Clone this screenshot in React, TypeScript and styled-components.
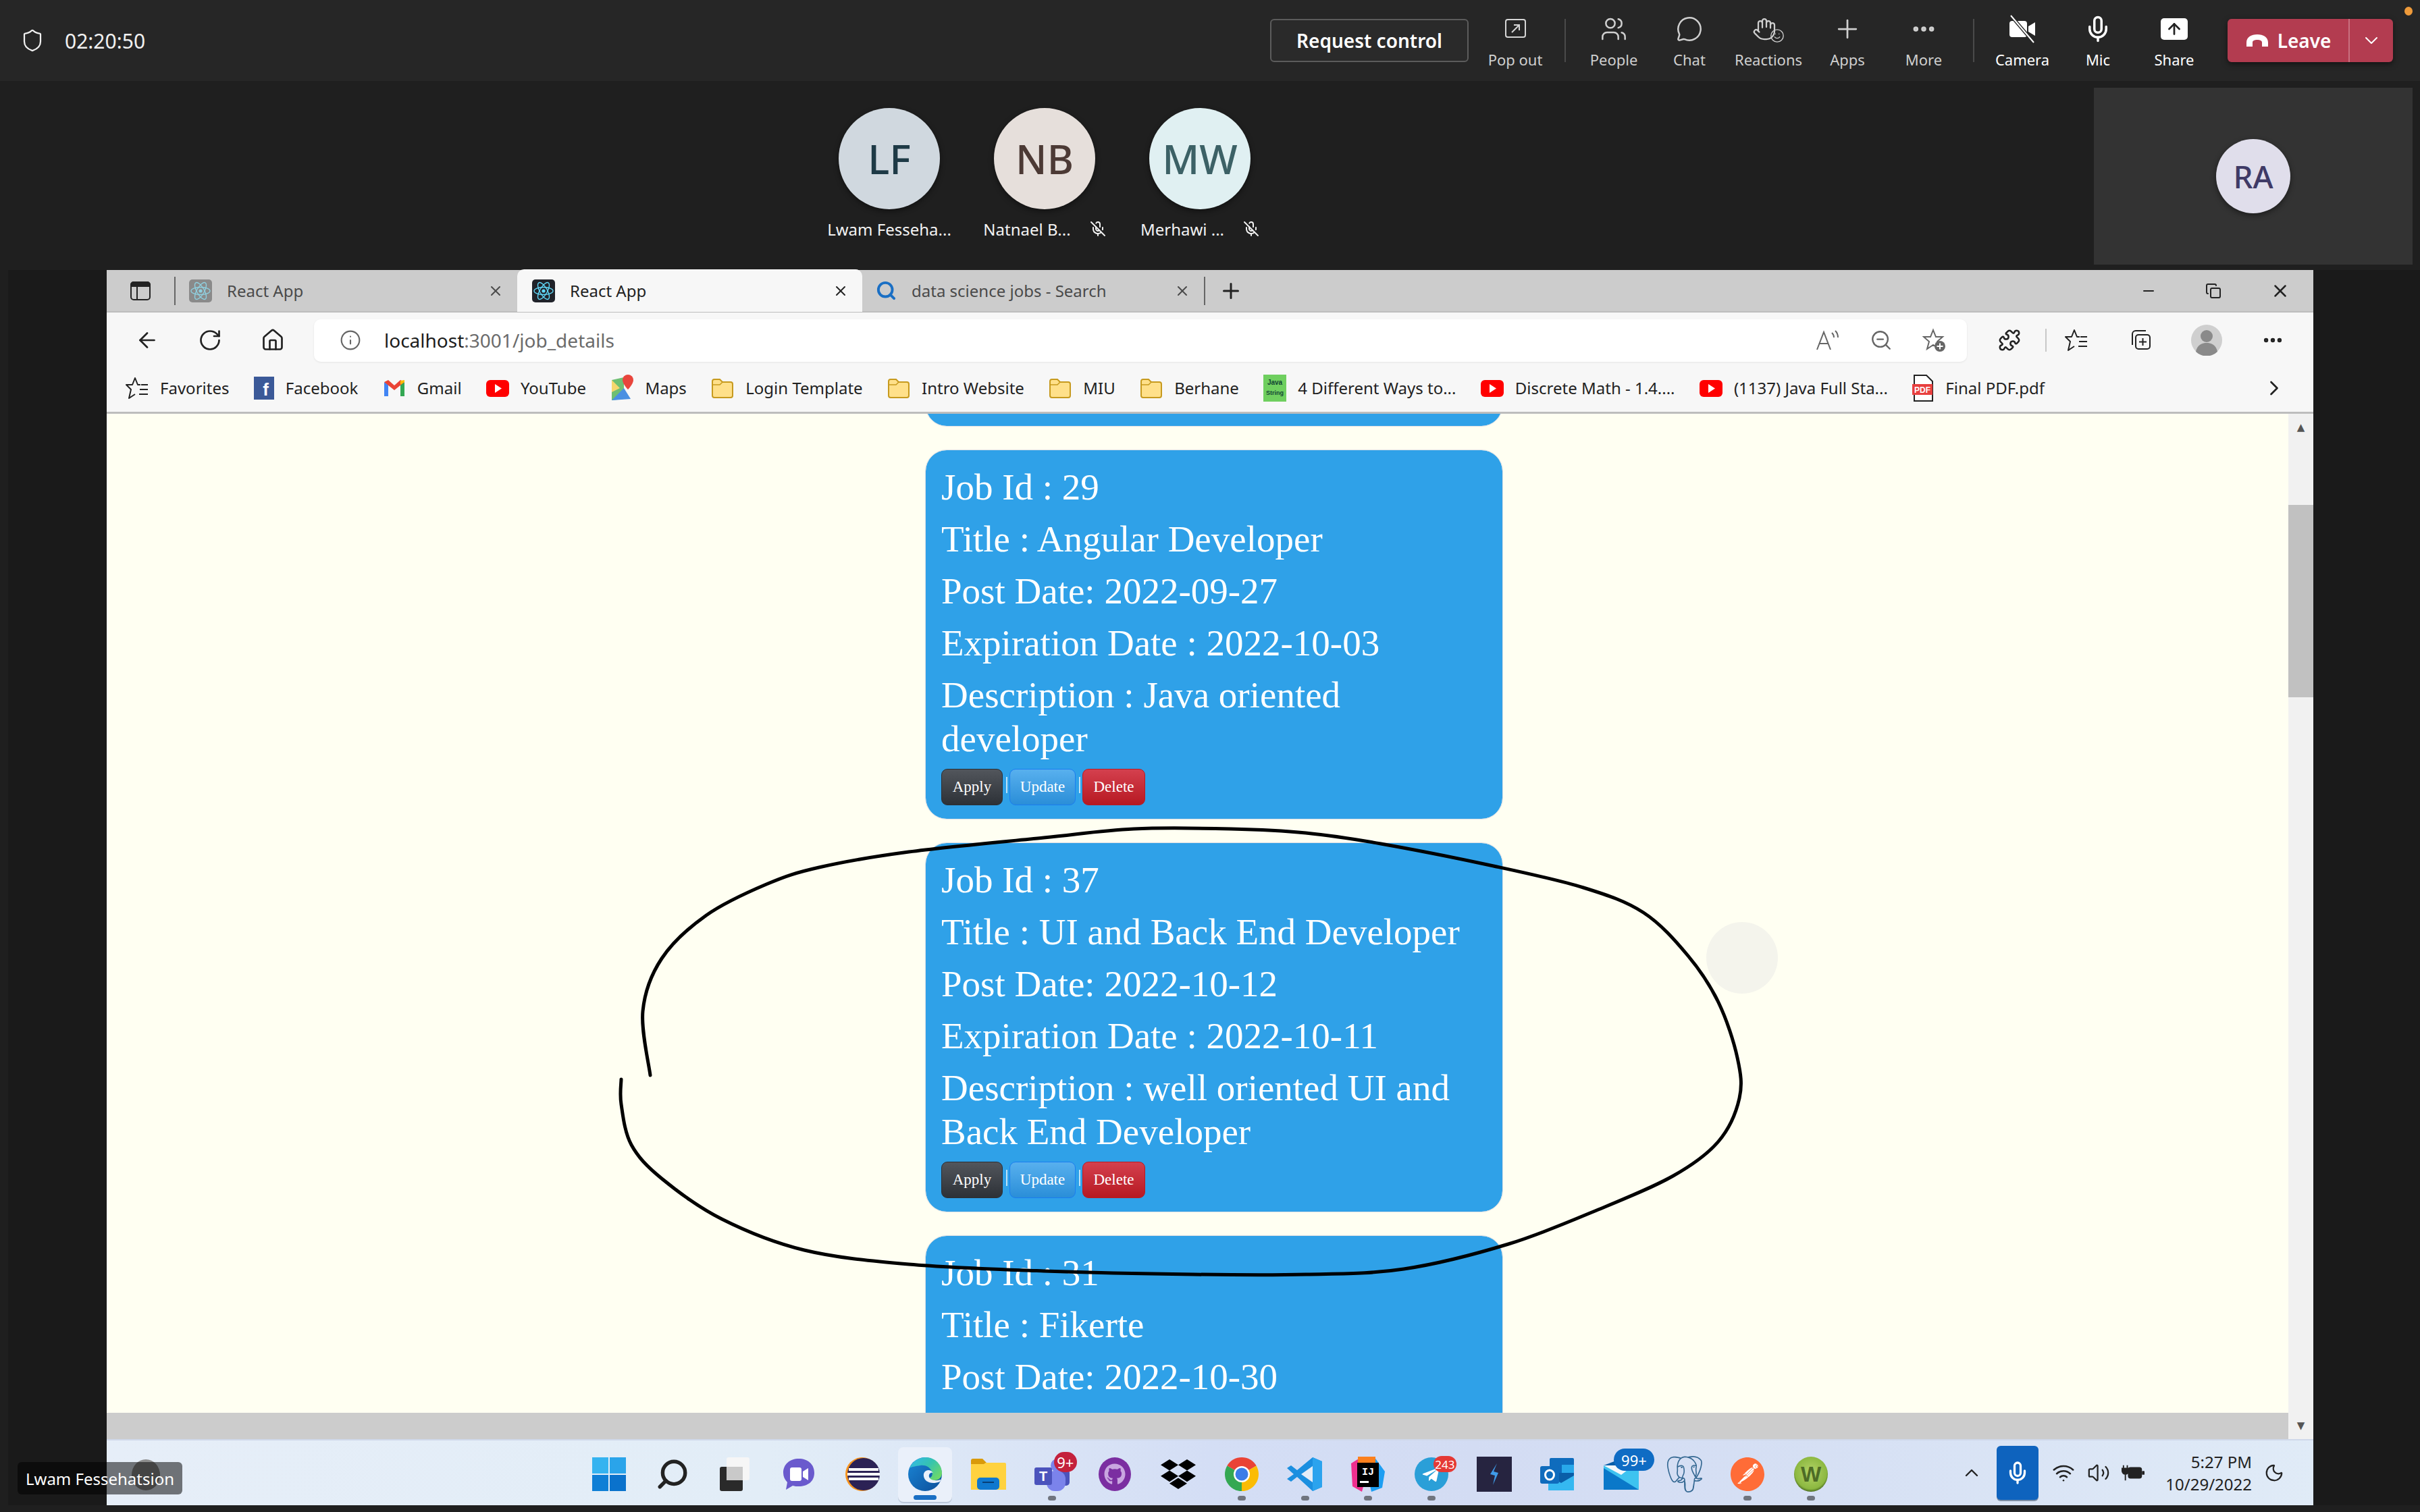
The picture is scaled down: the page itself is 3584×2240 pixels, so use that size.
import React from 'react'
import styled, { createGlobalStyle } from 'styled-components'
import {
	ArrowLeft, ArrowUp, ChevronDown, ChevronRight, ChevronUp, Copy, Ellipsis, Hand, Home, Info, MessageCircle, Mic, MicOff,
	Minus, Moon, Plus, Puzzle, RotateCw, Search, Shield, Smile, Users, Volume2, Wifi, X, ZoomOut,
} from 'lucide-react'
import { FaDropbox, FaGithub, FaTelegramPlane } from 'react-icons/fa'
import { SiPostgresql, SiPostman } from 'react-icons/si'

const GlobalStyle = createGlobalStyle`
	html, body {
		margin: 0;
		padding: 0;
		background: #1f1f1f;
	}
	* {
		box-sizing: border-box;
	}
`

const Page = styled.div`
	position: relative;
	width: 3584px;
	height: 2240px;
	overflow: hidden;
	background: #1f1f1f;
	font-family: "Noto Sans", sans-serif;
`

/* meeting toolbar */
const TopBar = styled.div`
	height: 120px;
	background: #262626;
	display: flex;
	align-items: center;
	padding: 0 40px 0 30px;
	color: #fff;
`

const Timer = styled.div`
	display: flex;
	align-items: center;
	gap: 30px;
	font-size: 30px;
	color: #f0f0f0;
	margin-right: auto;
`

const RequestButton = styled.div`
	width: 294px;
	height: 64px;
	border: 2px solid #5c5c5c;
	border-radius: 6px;
	background: #2a2a2a;
	display: flex;
	align-items: center;
	justify-content: center;
	font-size: 28px;
	font-weight: 600;
	margin-right: 19px;
`

const TopAction = styled.div<{ $w: number; $bright?: boolean }>`
	width: ${p => p.$w}px;
	height: 82px;
	display: flex;
	flex-direction: column;
	align-items: center;
	justify-content: space-between;
	font-size: 22px;
	line-height: 26px;
	color: ${p => (p.$bright ? '#fff' : '#cfcfcf')};
`

const ActionIcon = styled.div`
	height: 48px;
	display: flex;
	align-items: center;
	justify-content: center;
`

const SmileBadge = styled.span`
	display: flex;
	margin: 20px 0 0 -10px;
`

const TopSep = styled.div<{ $ml: number }>`
	width: 2px;
	height: 64px;
	background: #4a4a4a;
	margin: 0 15px 0 ${p => p.$ml}px;
`

const ShareBox = styled.div`
	width: 40px;
	height: 32px;
	background: #fff;
	border-radius: 5px;
	display: flex;
	align-items: center;
	justify-content: center;
	color: #222;
`

const LeaveButton = styled.div`
	width: 245px;
	height: 64px;
	margin-left: 22px;
	background: #b33c50;
	border-radius: 6px;
	display: flex;
	align-items: center;
	box-shadow: 0 3px 8px rgba(0, 0, 0, 0.5);
`

const LeaveMain = styled.div`
	width: 181px;
	height: 100%;
	display: flex;
	align-items: center;
	justify-content: center;
	gap: 12px;
	font-size: 28px;
	font-weight: 600;
	border-right: 2px solid #c9707f;
`

const LeaveCaret = styled.div`
	flex: 1;
	display: flex;
	justify-content: center;
`

const RecordDot = styled.div`
	position: absolute;
	top: 10px;
	left: 3561px;
	width: 12px;
	height: 13px;
	border-radius: 50%;
	background: #ee9a3a;
`

/* participants */
const Stage = styled.div`
	height: 280px;
	display: flex;
	padding-left: 1202px;
`

const Tile = styled.div`
	width: 230px;
	padding-top: 40px;
	display: flex;
	flex-direction: column;
	align-items: center;
`

const Avatar = styled.div<{ $bg: string; $fg: string; $size?: number }>`
	width: ${p => p.$size || 150}px;
	height: ${p => p.$size || 150}px;
	border-radius: 50%;
	background: ${p => p.$bg};
	color: ${p => p.$fg};
	font-size: ${p => ((p.$size || 150) > 120 ? 60 : 46)}px;
	font-weight: 500;
	display: flex;
	align-items: center;
	justify-content: center;
	box-shadow: 0 3px 8px rgba(0, 0, 0, 0.45);
`

const TileName = styled.div`
	margin-top: 15px;
	height: 28px;
	display: flex;
	align-items: center;
	gap: 28px;
	font-size: 24px;
	color: #f2f2f2;
	white-space: nowrap;
`

const SelfTile = styled.div`
	width: 472px;
	height: 262px;
	margin: 10px 11px 0 auto;
	background: #333;
	display: flex;
	align-items: center;
	justify-content: center;
`

/* browser */
const Surface = styled.div`
	height: 1830px;
	margin-left: 12px;
	padding-left: 146px;
	background: #1a1a1a;
`

const Browser = styled.div`
	width: 3268px;
	height: 1830px;
	display: flex;
	flex-direction: column;
	background: #f7f7f7;
`

const TabStrip = styled.div`
	height: 63px;
	background: #ccc;
	display: flex;
	align-items: center;
	border-bottom: 2px solid #bdbdbd;
	color: #222;
`

const StripButton = styled.div`
	width: 100px;
	padding-left: 34px;
	height: 100%;
	display: flex;
	align-items: center;
`

const StripSep = styled.div`
	width: 2px;
	height: 42px;
	background: #666;
`

const Tab = styled.div<{ $active?: boolean; $w: number }>`
	width: ${p => p.$w}px;
	height: 63px;
	display: flex;
	align-items: center;
	gap: 22px;
	padding: 0 20px 0 ${p => (p.$active ? 22 : 20)}px;
	background: ${p => (p.$active ? '#f7f7f7' : 'transparent')};
	border-radius: ${p => (p.$active ? '10px 10px 0 0' : '0')};
	color: ${p => (p.$active ? '#222' : '#4a4a4a')};
	font-size: 24px;
`

const TabTitle = styled.span`
	flex: 1;
	white-space: nowrap;
`

const NewTab = styled.div`
	margin-left: 20px;
	display: flex;
`

const WindowControls = styled.div`
	margin-left: auto;
	display: flex;
	align-items: center;
	gap: 72px;
	padding-right: 34px;
`

const Toolbar = styled.div`
	height: 76px;
	padding-top: 6px;
	display: flex;
	align-items: center;
	color: #222;
`

const NavButtons = styled.div`
	width: 307px;
	padding-left: 42px;
	display: flex;
	align-items: center;
	gap: 57px;
`

const AddressBar = styled.div`
	width: 2448px;
	height: 63px;
	background: #fff;
	border-radius: 10px;
	display: flex;
	align-items: center;
	padding: 0 30px 0 38px;
	box-shadow: 0 1px 3px rgba(0, 0, 0, 0.08);
	color: #666;
	font-size: 28px;
	gap: 34px;
`

const Url = styled.div`
	flex: 1;
	color: #6b6b6b;
	b {
		font-weight: 400;
		color: #1c1c1c;
	}
`

const AddressIcons = styled.div`
	display: flex;
	align-items: center;
	gap: 44px;
	color: #666;
`

const BrowserTools = styled.div`
	flex: 1;
	display: flex;
	align-items: center;
	padding-left: 46px;
`

const ToolSep = styled.div`
	width: 2px;
	height: 34px;
	background: #c8c8c8;
	margin: 0 27px 0 36px;
`

const ToolSlot = styled.div<{ $mr: number }>`
	display: flex;
	margin-right: ${p => p.$mr}px;
`

const Bookmarks = styled.div`
	height: 74px;
	display: flex;
	align-items: center;
	padding: 0 40px 0 28px;
	gap: 36.4px;
	border-bottom: 3px solid #bdbdbd;
	font-size: 24px;
	color: #222;
`

const Bookmark = styled.div`
	display: flex;
	align-items: center;
	gap: 17px;
	white-space: nowrap;
`

const BookmarksEnd = styled.div`
	margin-left: auto;
	display: flex;
`

const Body = styled.div`
	flex: 1;
	min-height: 0;
	display: flex;
`

const BodyMain = styled.div`
	flex: 1;
	display: flex;
	flex-direction: column;
	min-width: 0;
`

const Content = styled.div`
	flex: 1;
	min-height: 0;
	overflow: hidden;
	background: #fffff2;
	display: flex;
	flex-direction: column;
	align-items: center;
	gap: 34px;
	padding-left: 49px;
	font-family: "Liberation Serif", serif;
`

const StatusBand = styled.div`
	height: 39px;
	background: #ccc;
`

const Scrollbar = styled.div`
	width: 37px;
	background: #f1f1f1;
	display: flex;
	flex-direction: column;
	align-items: center;
	color: #555;
`

const ScrollArrow = styled.div<{ $end?: boolean }>`
	height: 40px;
	margin-top: ${p => (p.$end ? 'auto' : '0')};
	display: flex;
	align-items: center;
	justify-content: center;
	font-family: "DejaVu Sans", sans-serif;
	font-size: 15px;
`

const ScrollThumb = styled.div`
	width: 100%;
	height: 285px;
	margin-top: 95px;
	background: #c1c1c1;
`

const Card = styled.div<{ $stub?: boolean; $tall?: boolean }>`
	flex: none;
	width: 856px;
	padding: 22px 23px 20px 23px;
	background: #2fa1e8;
	border: 1px solid #dcdfe4;
	background-clip: padding-box;
	border-radius: 32px;
	color: #fff;
	${p => p.$stub && 'height: 100px; margin-top: -81px;'}
	${p => p.$tall && 'min-height: 548px;'}
`

const Line = styled.p`
	margin: 0 0 12px;
	font-size: 55px;
	line-height: 65px;
`

const ButtonRow = styled.div`
	display: flex;
	align-items: center;
`

const JobButton = styled.div<{ $kind: 'apply' | 'update' | 'delete' }>`
	height: 54px;
	width: ${p => ({ apply: 91, update: 98, delete: 93 })[p.$kind]}px;
	border-radius: 9px;
	display: flex;
	align-items: center;
	justify-content: center;
	font-size: 23px;
	color: #fff;
	border: 1px solid ${p => ({ apply: '#2b2e33', update: '#1a7df0', delete: '#b81a22' })[p.$kind]};
	background: linear-gradient(
		${p => ({ apply: '#52565c, #2d3137', update: '#58b0ee, #2a8ed8', delete: '#d4404e, #b71922' })[p.$kind]}
	);
`

const Pipe = styled.span`
	width: 2px;
	height: 24px;
	margin: -6px 3px 0 5px;
	background: #bfe2f8;
`

/* taskbar */
const Taskbar = styled.div`
	height: 98px;
	display: flex;
	align-items: stretch;
	padding-left: 37px;
	border-top: 2px solid #cfd8ea;
	background: linear-gradient(90deg, #e6eef8 0%, #e2edf7 30%, #d4def5 50%, #d3dcf3 62%, #d6e0f4 78%, #e0ebf7 100%);
`

const WeatherDot = styled.div`
	width: 42px;
	height: 46px;
	margin: 28px 618px 0 0;
	border-radius: 50%;
	background: #8e8e8e;
`

const TaskItem = styled.div<{ $active?: boolean; $dot?: boolean }>`
	position: relative;
	width: 93.7px;
	display: flex;
	align-items: center;
	justify-content: center;
	color: #222;
	${p => p.$active && `
		&::before {
			content: '';
			position: absolute;
			left: 7px;
			right: 7px;
			top: 10px;
			bottom: 5px;
			border-radius: 8px;
			background: #eaf0fa;
			box-shadow: 0 2px 0 #bcc8da;
		}
		&::after {
			content: '';
			position: absolute;
			left: 30px;
			width: 34px;
			height: 7px;
			bottom: 8px;
			border-radius: 4px;
			background: #1a6fc4;
		}
	`}
	${p => p.$dot && `
		&::after {
			content: '';
			position: absolute;
			left: 41px;
			width: 12px;
			height: 7px;
			bottom: 7px;
			border-radius: 4px;
			background: #70757f;
		}
	`}
	& > svg {
		position: relative;
		z-index: 1;
		margin-top: 4px;
	}
`

const Badge = styled.div<{ $bg: string; $top: number; $left: number; $w: number; $h: number }>`
	position: absolute;
	z-index: 2;
	top: ${p => p.$top}px;
	left: ${p => p.$left}px;
	width: ${p => p.$w}px;
	height: ${p => p.$h}px;
	border-radius: ${p => p.$h / 2}px;
	background: ${p => p.$bg};
	color: #fff;
	font-size: ${p => (p.$h > 26 ? 22 : 17)}px;
	display: flex;
	align-items: center;
	justify-content: center;
`

const Tray = styled.div`
	margin-left: auto;
	width: 522px;
	display: flex;
	align-items: center;
	padding-right: 43px;
	color: #222;
`

const TrayIcon = styled.div<{ $ml: number }>`
	width: 34px;
	margin-left: ${p => p.$ml}px;
	display: flex;
	justify-content: center;
`

const TrayMic = styled.div`
	width: 62px;
	height: 80px;
	margin-left: 21px;
	border-radius: 6px;
	background: #0e63be;
	box-shadow: 0 2px 0 #7d8ea5;
	display: flex;
	align-items: center;
	justify-content: center;
	color: #fff;
`

const Clock = styled.div`
	flex: 1;
	text-align: right;
	font-size: 24px;
	line-height: 33px;
	padding-right: 18px;
`

/* overlays */
const InkLayer = styled.svg`
	position: absolute;
	left: 0;
	top: 0;
	pointer-events: none;
`

const LaserGhost = styled.div`
	position: absolute;
	left: 2527px;
	top: 1366px;
	width: 106px;
	height: 106px;
	border-radius: 50%;
	background: #f4f4ec;
`

const NameTag = styled.div`
	position: absolute;
	left: 26px;
	top: 2166px;
	width: 244px;
	height: 48px;
	border-radius: 6px;
	background: rgba(0, 0, 0, 0.52);
	color: #fff;
	font-size: 24px;
	display: flex;
	align-items: center;
	justify-content: center;
	white-space: nowrap;
`

const VerticalTabsIcon = () => (
	<svg width="32" height="32" viewBox="0 0 32 32" fill="none" stroke="currentColor" strokeWidth="2">
		<rect x="2" y="3" width="28" height="26" rx="4" />
		<path d="M2 9V7a4 4 0 0 1 4-4h20a4 4 0 0 1 4 4v2z" fill="currentColor" />
		<path d="M11 9v20" />
	</svg>
)

const ReactLogo = ({ dim }: { dim?: boolean }) => (
	<svg width="34" height="34" viewBox="0 0 34 34">
		<rect width="34" height="34" rx="5" fill={dim ? '#8a8a8a' : '#20232a'} />
		<g fill="none" stroke={dim ? '#8fd0e0' : '#61dafb'} strokeWidth="1.4">
			<ellipse cx="17" cy="17" rx="14" ry="5.5" />
			<ellipse cx="17" cy="17" rx="14" ry="5.5" transform="rotate(60 17 17)" />
			<ellipse cx="17" cy="17" rx="14" ry="5.5" transform="rotate(120 17 17)" />
		</g>
		<circle cx="17" cy="17" r="2.6" fill={dim ? '#8fd0e0' : '#61dafb'} />
	</svg>
)

const Folder = () => (
	<svg width="34" height="34" viewBox="0 0 34 34">
		<path d="M2 7a3 3 0 0 1 3-3h8l4 4h12a3 3 0 0 1 3 3v17a3 3 0 0 1-3 3H5a3 3 0 0 1-3-3z" fill="#ffe08a" stroke="#c79a1e" strokeWidth="2" />
		<path d="M2 12h11l4-4" fill="none" stroke="#c79a1e" strokeWidth="1.5" />
	</svg>
)

const YouTube = () => (
	<svg width="34" height="34" viewBox="0 0 34 34">
		<rect y="5" width="34" height="25" rx="6" fill="#f00" />
		<path d="M13 11l10 6.5-10 6.5z" fill="#fff" />
	</svg>
)

const Facebook = () => (
	<svg width="30" height="34" viewBox="0 0 30 34">
		<rect width="30" height="34" fill="#3b5998" />
		<text x="22" y="28" textAnchor="end" fontSize="26" fontWeight="700" fontFamily="Liberation Sans" fill="#fff">f</text>
	</svg>
)

const Gmail = () => (
	<svg width="34" height="28" viewBox="0 0 34 28">
		<path d="M2 26V5l6 4v17z" fill="#4285f4" />
		<path d="M26 26V9l6-4v21z" fill="#34a853" />
		<path d="M2 5l15 12L32 5l-6-3-9 8-9-8z" fill="#ea4335" />
		<path d="M26 9l6-4V2l-6 1z" fill="#fbbc04" />
	</svg>
)

const Maps = () => (
	<svg width="34" height="40" viewBox="0 0 34 40">
		<path d="M2 8l18-4v32L2 38z" fill="#6fbf73" />
		<path d="M2 38l18-18 10 16z" fill="#4a90e2" />
		<path d="M2 8l12 12-12 6z" fill="#f5d76e" />
		<path d="M26 0a8 8 0 0 1 8 8c0 6-8 14-8 14s-8-8-8-14a8 8 0 0 1 8-8z" fill="#e8453c" />
	</svg>
)

const JavaThumb = () => (
	<svg width="34" height="40" viewBox="0 0 34 40">
		<rect width="34" height="40" fill="#6fcf5f" />
		<text x="17" y="15" textAnchor="middle" fontSize="10" fontWeight="700" fontFamily="Liberation Sans" fill="#143">Java</text>
		<text x="17" y="30" textAnchor="middle" fontSize="9" fontWeight="700" fontFamily="Liberation Sans" fill="#143">String</text>
	</svg>
)

const PdfIcon = () => (
	<svg width="32" height="40" viewBox="0 0 32 40">
		<path d="M3 1h18l9 9v29H3z" fill="#fff" stroke="#222" strokeWidth="2" />
		<rect x="0" y="14" width="30" height="16" fill="#e8403f" />
		<text x="15" y="27" textAnchor="middle" fontSize="12" fontWeight="700" fontFamily="Liberation Sans" fill="#fff">PDF</text>
	</svg>
)

const FavoritesIcon = ({ size = 34 }: { size?: number }) => (
	<svg width={size} height={size} viewBox="0 0 34 34" fill="none" stroke="currentColor" strokeWidth="2" strokeLinejoin="round">
		<path d="M22 12h-4L14 2l-4 10H1l7 7-3 13 9-6" />
		<path d="M23 12h10M21 19h12M20 26h13" />
	</svg>
)

const CollectionsIcon = () => (
	<svg width="34" height="34" viewBox="0 0 34 34" fill="none" stroke="currentColor" strokeWidth="2">
		<path d="M4 24V8a5 5 0 0 1 5-5h15" />
		<rect x="9" y="9" width="21" height="21" rx="4" />
		<path d="M19.5 14v11M14 19.5h11" />
	</svg>
)

const ProfileIcon = () => (
	<svg width="46" height="46" viewBox="0 0 46 46">
		<circle cx="23" cy="23" r="23" fill="#cfcfcf" />
		<circle cx="23" cy="17" r="9" fill="#8a8a8a" />
		<path d="M7 40c2-10 9-13 16-13s14 3 16 13a23 23 0 0 1-32 0z" fill="#8a8a8a" />
	</svg>
)

const StarAdd = () => (
	<svg width="36" height="36" viewBox="0 0 36 36">
		<path d="M16 3l4 10h10l-8 7 3 11-9-6-9 6 3-11-8-7h10z" fill="none" stroke="currentColor" strokeWidth="2" />
		<circle cx="26" cy="27" r="8" fill="#666" />
		<path d="M26 22.500v9M21.500 27h9" stroke="#fff" strokeWidth="2" />
	</svg>
)

const ReadAloud = () => (
	<svg width="36" height="34" viewBox="0 0 36 34" fill="none" stroke="currentColor" strokeWidth="2">
		<path d="M2 31L12 5l10 26M6 22h12" />
		<path d="M24 6c2 2 3 4 3 7M29 3c3 3 4 6 4 10" />
	</svg>
)

const PopOutIcon = () => (
	<svg width="36" height="36" viewBox="0 0 36 36" fill="none" stroke="#d6d6d6" strokeWidth="2">
		<path d="M7 4h23a3 3 0 0 1 3 3v20a3 3 0 0 1-3 3H7a3 3 0 0 1-3-3V7a3 3 0 0 1 3-3z" />
		<path d="M13 23L24 12M16 12h8v8" />
	</svg>
)

const CameraOffIcon = () => (
	<svg width="44" height="44" viewBox="0 0 44 44">
		<rect x="3" y="10" width="26" height="24" rx="4" fill="#fff" />
		<path d="M31 18l10-6v20l-10-6z" fill="#fff" />
		<path d="M5 2l34 40" stroke="#262626" strokeWidth="5" />
		<path d="M5 2l34 40" stroke="#fff" strokeWidth="2" />
	</svg>
)

const HangUpIcon = () => (
	<svg width="36" height="22" viewBox="0 0 36 22">
		<path d="M2 20V14C2 6 9 2 18 2s16 4 16 12v6h-9v-6c0-3-3-4-7-4s-7 1-7 4v6z" fill="#fff" />
	</svg>
)

const WindowsLogo = () => (
	<svg width="50" height="50" viewBox="0 0 50 50">
		<rect width="24" height="24" fill="#35b3f0" />
		<rect x="26" width="24" height="24" fill="#2aa4ea" />
		<rect y="26" width="24" height="24" fill="#0f7fd6" />
		<rect x="26" y="26" width="24" height="24" fill="#0a72cc" />
	</svg>
)

const TaskView = () => (
	<svg width="50" height="50" viewBox="0 0 50 50">
		<rect x="12" width="34" height="34" rx="3" fill="#f6f6f6" />
		<rect x="2" y="14" width="34" height="36" rx="3" fill="#2a2a2a" />
		<rect x="12" y="14" width="24" height="20" fill="#c9c9c9" />
	</svg>
)

const MeetBubble = () => (
	<svg width="50" height="50" viewBox="0 0 50 50">
		<path d="M25 2c13 0 23 8 23 21s-10 20-23 20c-3 0-6 0-9-1l-10 6 2-11c-4-4-6-9-6-14C2 10 12 2 25 2z" fill="#6a5acd" />
		<rect x="12" y="15" width="17" height="20" rx="3" fill="#fff" />
		<path d="M31 21l8-5v18l-8-5z" fill="#fff" />
	</svg>
)

const EclipseLogo = () => (
	<svg width="52" height="52" viewBox="0 0 52 52">
		<circle cx="26" cy="26" r="25" fill="#f7941e" />
		<circle cx="28" cy="26" r="24" fill="#2c2255" />
		<path d="M6 19h44M4 26h48M6 33h44" stroke="#fff" strokeWidth="4" />
	</svg>
)

const EdgeLogo = () => (
	<svg width="52" height="52" viewBox="0 0 52 52">
		<defs>
			<linearGradient id="edgeTop" x1="0" y1="0" x2="1" y2="0.7">
				<stop offset="0" stopColor="#33b8ee" />
				<stop offset="0.55" stopColor="#35c3b0" />
				<stop offset="1" stopColor="#6cd86a" />
			</linearGradient>
			<linearGradient id="edgeLow" x1="0" y1="0" x2="1" y2="1">
				<stop offset="0" stopColor="#1b86d6" />
				<stop offset="1" stopColor="#0c4f9a" />
			</linearGradient>
		</defs>
		<circle cx="26" cy="26" r="25" fill="url(#edgeLow)" />
		<path d="M3 17C8 6 17 1 27 1c14 0 24 11 24 23 0 8-6 11-11 11-4 0-8-1-9-3 5-1 7-5 5-10-3-7-10-10-17-9-7 1-13 2-16 4z" fill="url(#edgeTop)" />
		<path d="M35 21c-6-3-12 1-11 8 1 8 11 13 24 8 1-1 1-2 1-3-9 3-16 0-17-4-1-4 2-7 6-6z" fill="#eaf0fa" />
	</svg>
)

const FilesLogo = () => (
	<svg width="52" height="46" viewBox="0 0 52 46">
		<path d="M0 3a3 3 0 0 1 3-3h14l6 6v8H0z" fill="#d99a0a" />
		<path d="M0 8h19l3-2h28a2 2 0 0 1 2 2v38H0z" fill="#ffd23f" />
		<rect x="9" y="28" width="33" height="18" rx="5" fill="#0f78cf" />
		<rect x="17" y="34" width="17" height="2" fill="#083e75" />
	</svg>
)

const TeamsLogo = () => (
	<svg width="52" height="50" viewBox="0 0 52 50">
		<circle cx="34" cy="12" r="10" fill="#7b83eb" />
		<rect x="38" y="18" width="14" height="24" rx="5" fill="#4b53bc" />
		<rect x="18" y="20" width="28" height="30" rx="12" fill="#7b83eb" />
		<rect x="0" y="15" width="26" height="26" rx="3" fill="#4b53bc" />
		<text x="13" y="35" textAnchor="middle" fontSize="20" fontWeight="700" fontFamily="Liberation Sans" fill="#fff">T</text>
	</svg>
)

const GithubLogo = () => (
	<svg width="48" height="50" viewBox="0 0 48 50">
		<ellipse cx="24" cy="25" rx="24" ry="25" fill="#7b2ea1" />
		<foreignObject x="8" y="9" width="32" height="32">
			<FaGithub size={32} color="#c9a6e0" />
		</foreignObject>
	</svg>
)

const ChromeLogo = () => (
	<svg width="52" height="52" viewBox="0 0 52 52">
		<path d="M26 26L4.350 13.500A25 25 0 0 1 47.650 13.500z" fill="#ea4335" />
		<path d="M26 26L47.650 13.500A25 25 0 0 1 26 51z" fill="#fbbc04" />
		<path d="M26 26V51A25 25 0 0 1 4.350 13.500z" fill="#34a853" />
		<circle cx="26" cy="26" r="12" fill="#fff" />
		<circle cx="26" cy="26" r="9.500" fill="#3b7de8" />
	</svg>
)

const VsCodeLogo = () => (
	<svg width="52" height="52" viewBox="0 0 52 52">
		<path d="M38 1l14 6v38l-14 6-23-21-9 7-6-4 10-7L0 17l6-4 9 7z" fill="#1b8fe0" />
		<path d="M38 1l14 6v38l-14 6z" fill="#2ba3ee" />
		<path d="M38 14L21 26l17 12z" fill="#e4edf8" />
	</svg>
)

const IdeaLogo = () => (
	<svg width="50" height="52" viewBox="0 0 50 52">
		<path d="M0 10L16 0l10 14-10 38-14-8z" fill="#f0308f" />
		<path d="M50 22L34 0 20 8l10 44 16-6z" fill="#1d9ef2" />
		<path d="M10 0h26v14H10z" fill="#fc801d" />
		<rect x="9" y="9" width="32" height="36" fill="#000" />
		<text x="25" y="27" textAnchor="middle" fontSize="15" fontWeight="700" fontFamily="Liberation Mono" fill="#fff">IJ</text>
		<rect x="13" y="36" width="13" height="3" fill="#fff" />
	</svg>
)

const TelegramLogo = () => (
	<svg width="50" height="50" viewBox="0 0 50 50">
		<circle cx="25" cy="25" r="25" fill="#2a9fd8" />
		<foreignObject x="10" y="12" width="28" height="28">
			<FaTelegramPlane size={28} color="#fff" />
		</foreignObject>
	</svg>
)

const StardockLogo = () => (
	<svg width="52" height="52" viewBox="0 0 52 52">
		<rect width="52" height="52" fill="#262440" />
		<path d="M30 10L20 26l7 2-3 14 8-18-7-2z" fill="#3f9be8" />
	</svg>
)

const OutlookLogo = () => (
	<svg width="52" height="48" viewBox="0 0 52 48">
		<rect x="14" width="36" height="22" rx="2" fill="#0f6cbd" />
		<rect x="32" y="10" width="18" height="14" fill="#28a8ea" />
		<path d="M12 22h38v26H12z" fill="#0a5ea8" />
		<path d="M12 26l19 11 19-11v22H12z" fill="#35b8f1" />
		<rect y="12" width="28" height="26" rx="3" fill="#0f6cbd" />
		<ellipse cx="14" cy="25" rx="6.500" ry="7" fill="none" stroke="#fff" strokeWidth="3" />
	</svg>
)

const MailLogo = () => (
	<svg width="52" height="46" viewBox="0 0 52 46">
		<path d="M0 10L26 0v12z" fill="#0a5ea8" />
		<rect y="10" width="52" height="36" fill="#3ec3f0" />
		<path d="M0 10h44L26 24z" fill="#f4f8fb" />
		<path d="M0 46V14l52 32z" fill="#0a78c9" />
	</svg>
)

const OrbLogo = () => (
	<svg width="50" height="52" viewBox="0 0 50 52">
		<defs>
			<radialGradient id="orb" cx="0.5" cy="0.45" r="0.55">
				<stop offset="0" stopColor="#b4d468" />
				<stop offset="0.85" stopColor="#8cb840" />
				<stop offset="1" stopColor="#4d6f22" />
			</radialGradient>
		</defs>
		<ellipse cx="25" cy="26" rx="25" ry="26" fill="url(#orb)" />
		<text x="25" y="37" textAnchor="middle" fontSize="32" fontWeight="700" fontFamily="Liberation Sans" fill="#4d6c26">W</text>
	</svg>
)

const PostmanLogo = () => (
	<svg width="50" height="50" viewBox="0 0 50 50">
		<circle cx="25" cy="25" r="24" fill="#fff" />
		<foreignObject x="0" y="0" width="50" height="50">
			<SiPostman size={50} color="#ff6c37" />
		</foreignObject>
	</svg>
)

const BatteryPlug = () => (
	<svg width="36" height="26" viewBox="0 0 36 26">
		<path d="M3 1v5M9 1v5M1 6h10v4a5 5 0 0 1-10 0zM6 15v10" fill="#222" stroke="#222" strokeWidth="2" />
		<rect x="10" y="4" width="22" height="18" rx="4" fill="#222" />
		<rect x="32" y="10" width="4" height="6" rx="1" fill="#222" />
	</svg>
)

// catmull-rom through the points of a hand drawn stroke
const smoothPath = (pts: number[][]) => {
	let d = `M${pts[0][0]} ${pts[0][1]}`
	for (let i = 0; i < pts.length - 1; i++) {
		const p0 = pts[Math.max(i - 1, 0)]
		const p1 = pts[i]
		const p2 = pts[i + 1]
		const p3 = pts[Math.min(i + 2, pts.length - 1)]
		const c1x = p1[0] + (p2[0] - p0[0]) / 6
		const c1y = p1[1] + (p2[1] - p0[1]) / 6
		const c2x = p2[0] - (p3[0] - p1[0]) / 6
		const c2y = p2[1] - (p3[1] - p1[1]) / 6
		d += ` C${c1x} ${c1y} ${c2x} ${c2y} ${p2[0]} ${p2[1]}`
	}
	return d
}

const inkPoints = [
	[963, 1593], [952, 1498], [980, 1420], [1046, 1356], [1135, 1310], [1213, 1285], [1346, 1262], [1546, 1241],
	[1679, 1228], [1823, 1228], [1934, 1234], [2045, 1250], [2212, 1283], [2345, 1315], [2434, 1352], [2500, 1416],
	[2545, 1485], [2573, 1567], [2576, 1627], [2545, 1691], [2478, 1742], [2367, 1792], [2234, 1843], [2079, 1880],
	[1934, 1888], [1768, 1888], [1546, 1883], [1346, 1873], [1191, 1852], [1069, 1806], [980, 1746], [935, 1696],
	[920, 1636], [920, 1599],
]

const topActions = [
	{ label: 'People', w: 112, icon: <Users size={40} strokeWidth={1.5} /> },
	{ label: 'Chat', w: 112, icon: <MessageCircle size={40} strokeWidth={1.5} /> },
	{ label: 'Reactions', w: 122, icon: <><Hand size={36} strokeWidth={1.5} /><SmileBadge><Smile size={22} strokeWidth={1.5} /></SmileBadge></> },
	{ label: 'Apps', w: 112, icon: <Plus size={44} strokeWidth={1.5} /> },
	{ label: 'More', w: 114, icon: <Ellipsis size={40} strokeWidth={2.5} /> },
]

const jobs = [
	{ id: 29, title: 'Angular Developer', post: '2022-09-27', exp: '2022-10-03', desc: 'Java oriented developer' },
	{ id: 37, title: 'UI and Back End Developer', post: '2022-10-12', exp: '2022-10-11', desc: 'well oriented UI and Back End Developer' },
]

const bookmarks = [
	{ icon: <Facebook />, label: 'Facebook' },
	{ icon: <Gmail />, label: 'Gmail' },
	{ icon: <YouTube />, label: 'YouTube' },
	{ icon: <Maps />, label: 'Maps' },
	{ icon: <Folder />, label: 'Login Template' },
	{ icon: <Folder />, label: 'Intro Website' },
	{ icon: <Folder />, label: 'MIU' },
	{ icon: <Folder />, label: 'Berhane' },
	{ icon: <JavaThumb />, label: '4 Different Ways to...' },
	{ icon: <YouTube />, label: 'Discrete Math - 1.4....' },
	{ icon: <YouTube />, label: '(1137) Java Full Sta...' },
	{ icon: <PdfIcon />, label: 'Final PDF.pdf' },
]

const App = () => {
	return (
		<Page>
			<GlobalStyle />
			<TopBar>
				<Timer>
					<Shield size={36} strokeWidth={1.5} />
					02:20:50
				</Timer>
				<RequestButton>Request control</RequestButton>
				<TopAction $w={100}>
					<ActionIcon><PopOutIcon /></ActionIcon>
					Pop out
				</TopAction>
				<TopSep $ml={23} />
				{topActions.map(a => (
					<TopAction key={a.label} $w={a.w}>
						<ActionIcon>{a.icon}</ActionIcon>
						{a.label}
					</TopAction>
				))}
				<TopSep $ml={16} />
				<TopAction $w={112} $bright>
					<ActionIcon><CameraOffIcon /></ActionIcon>
					Camera
				</TopAction>
				<TopAction $w={112} $bright>
					<ActionIcon><Mic size={42} strokeWidth={2} /></ActionIcon>
					Mic
				</TopAction>
				<TopAction $w={114} $bright>
					<ActionIcon><ShareBox><ArrowUp size={26} strokeWidth={2.5} /></ShareBox></ActionIcon>
					Share
				</TopAction>
				<LeaveButton>
					<LeaveMain><HangUpIcon />Leave</LeaveMain>
					<LeaveCaret><ChevronDown size={32} strokeWidth={1.5} /></LeaveCaret>
				</LeaveButton>
			</TopBar>
			<RecordDot />
			<Stage>
				<Tile>
					<Avatar $bg="#d0d8df" $fg="#1e3a46">LF</Avatar>
					<TileName>Lwam Fesseha...</TileName>
				</Tile>
				<Tile>
					<Avatar $bg="#e6dfdb" $fg="#4c3a35">NB</Avatar>
					<TileName>Natnael B... <MicOff size={24} /></TileName>
				</Tile>
				<Tile>
					<Avatar $bg="#e0f0f2" $fg="#3c6166">MW</Avatar>
					<TileName>Merhawi ... <MicOff size={24} /></TileName>
				</Tile>
				<SelfTile>
					<Avatar $bg="#e0deeb" $fg="#3f3a66" $size={110}>RA</Avatar>
				</SelfTile>
			</Stage>
			<Surface>
				<Browser>
					<TabStrip>
						<StripButton><VerticalTabsIcon /></StripButton>
						<StripSep />
						<Tab $w={506}>
							<ReactLogo dim />
							<TabTitle>React App</TabTitle>
							<X size={24} />
						</Tab>
						<Tab $active $w={511}>
							<ReactLogo />
							<TabTitle>React App</TabTitle>
							<X size={24} />
						</Tab>
						<Tab $w={506}>
							<Search size={31} color="#1a6fc4" strokeWidth={3} />
							<TabTitle>data science jobs - Search</TabTitle>
							<X size={24} />
						</Tab>
						<StripSep />
						<NewTab><Plus size={36} strokeWidth={2} /></NewTab>
						<WindowControls>
							<Minus size={24} />
							<Copy size={24} strokeWidth={2} />
							<X size={30} strokeWidth={2} />
						</WindowControls>
					</TabStrip>
					<Toolbar>
						<NavButtons>
							<ArrowLeft size={36} strokeWidth={1.8} />
							<RotateCw size={36} strokeWidth={1.8} />
							<Home size={36} strokeWidth={1.8} />
						</NavButtons>
						<AddressBar>
							<Info size={32} strokeWidth={1.6} />
							<Url><b>localhost</b>:3001/job_details</Url>
							<AddressIcons>
								<ReadAloud />
								<ZoomOut size={34} strokeWidth={1.7} />
								<StarAdd />
							</AddressIcons>
						</AddressBar>
						<BrowserTools>
							<Puzzle size={34} strokeWidth={1.8} />
							<ToolSep />
							<ToolSlot $mr={62}><FavoritesIcon /></ToolSlot>
							<ToolSlot $mr={57}><CollectionsIcon /></ToolSlot>
							<ToolSlot $mr={58}><ProfileIcon /></ToolSlot>
							<Ellipsis size={34} strokeWidth={2.5} />
						</BrowserTools>
					</Toolbar>
					<Bookmarks>
						<Bookmark><FavoritesIcon />Favorites</Bookmark>
						{bookmarks.map((b, i) => (
							<Bookmark key={i}>{b.icon}{b.label}</Bookmark>
						))}
						<BookmarksEnd><ChevronRight size={36} strokeWidth={1.8} /></BookmarksEnd>
					</Bookmarks>
					<Body>
						<BodyMain>
							<Content>
								<Card $stub />
								{jobs.map(job => (
									<Card key={job.id}>
										<Line>Job Id : {job.id}</Line>
										<Line>Title : {job.title}</Line>
										<Line>Post Date: {job.post}</Line>
										<Line>Expiration Date : {job.exp}</Line>
										<Line>Description : {job.desc}</Line>
										<ButtonRow>
											<JobButton $kind="apply">Apply</JobButton>
											<Pipe />
											<JobButton $kind="update">Update</JobButton>
											<Pipe />
											<JobButton $kind="delete">Delete</JobButton>
										</ButtonRow>
									</Card>
								))}
								<Card $tall>
									<Line>Job Id : 31</Line>
									<Line>Title : Fikerte</Line>
									<Line>Post Date: 2022-10-30</Line>
								</Card>
							</Content>
							<StatusBand />
						</BodyMain>
						<Scrollbar>
							<ScrollArrow>▲</ScrollArrow>
							<ScrollThumb />
							<ScrollArrow $end>▼</ScrollArrow>
						</Scrollbar>
					</Body>
					<Taskbar>
						<WeatherDot />
						<TaskItem><WindowsLogo /></TaskItem>
						<TaskItem><Search size={50} strokeWidth={2.6} transform="scale(-1 1)" /></TaskItem>
						<TaskItem><TaskView /></TaskItem>
						<TaskItem><MeetBubble /></TaskItem>
						<TaskItem><EclipseLogo /></TaskItem>
						<TaskItem $active><EdgeLogo /></TaskItem>
						<TaskItem><FilesLogo /></TaskItem>
						<TaskItem $dot><TeamsLogo /><Badge $bg="#c4213c" $top={17} $left={50} $w={34} $h={30}>9+</Badge></TaskItem>
						<TaskItem><GithubLogo /></TaskItem>
						<TaskItem><FaDropbox size={52} color="#000" /></TaskItem>
						<TaskItem $dot><ChromeLogo /></TaskItem>
						<TaskItem $dot><VsCodeLogo /></TaskItem>
						<TaskItem $dot><IdeaLogo /></TaskItem>
						<TaskItem $dot><TelegramLogo /><Badge $bg="#e53935" $top={23} $left={50} $w={34} $h={24}>243</Badge></TaskItem>
						<TaskItem><StardockLogo /></TaskItem>
						<TaskItem><OutlookLogo /></TaskItem>
						<TaskItem><MailLogo /><Badge $bg="#0f6cc4" $top={12} $left={36} $w={60} $h={33}>99+</Badge></TaskItem>
						<TaskItem><SiPostgresql size={54} color="#336791" /></TaskItem>
						<TaskItem $dot><PostmanLogo /></TaskItem>
						<TaskItem $dot><OrbLogo /></TaskItem>
						<Tray>
							<ChevronUp size={32} strokeWidth={1.8} />
							<TrayMic><Mic size={36} strokeWidth={2.2} /></TrayMic>
							<TrayIcon $ml={20}><Wifi size={34} strokeWidth={1.8} /></TrayIcon>
							<TrayIcon $ml={18}><Volume2 size={34} strokeWidth={1.6} /></TrayIcon>
							<TrayIcon $ml={17}><BatteryPlug /></TrayIcon>
							<Clock>5:27 PM<br />10/29/2022</Clock>
							<Moon size={30} strokeWidth={1.8} />
						</Tray>
					</Taskbar>
				</Browser>
			</Surface>
			<LaserGhost />
			<InkLayer width="3584" height="2240" viewBox="0 0 3584 2240">
				<path d={smoothPath(inkPoints)} fill="none" stroke="#000" strokeWidth="5" strokeLinecap="round" />
			</InkLayer>
			<NameTag>Lwam Fessehatsion</NameTag>
		</Page>
	)
}

export default App
